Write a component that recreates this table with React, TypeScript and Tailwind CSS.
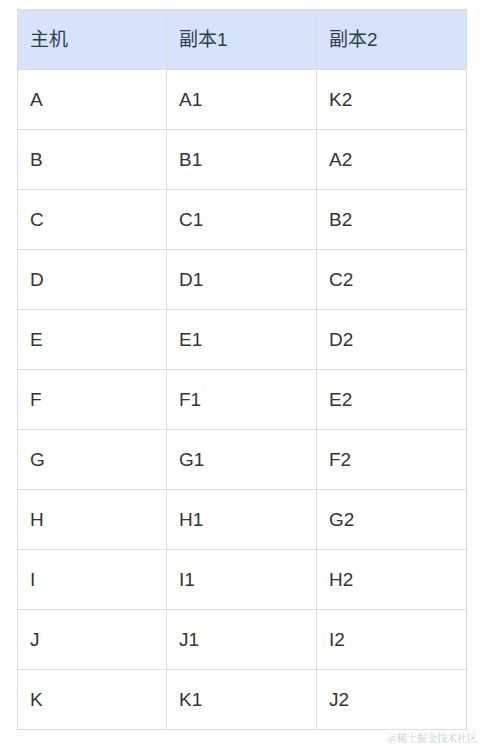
import React from 'react';

const rows: string[][] = [
  ['A', 'A1', 'K2'],
  ['B', 'B1', 'A2'],
  ['C', 'C1', 'B2'],
  ['D', 'D1', 'C2'],
  ['E', 'E1', 'D2'],
  ['F', 'F1', 'E2'],
  ['G', 'G1', 'F2'],
  ['H', 'H1', 'G2'],
  ['I', 'I1', 'H2'],
  ['J', 'J1', 'I2'],
  ['K', 'K1', 'J2'],
];

const font = { fontFamily: '"Liberation Sans", "Noto Sans CJK SC", sans-serif' };

export default function App() {
  return (
    <div className="relative w-[481px] h-[744px] bg-white overflow-hidden" style={font}>
      <div className="pt-[9px] pl-[17px]">
        <table className="w-[450px] border-collapse table-fixed text-[19px]">
          <thead>
            <tr className="h-[60px] bg-[#d6e3fa] text-[#2c3e50]">
              <th className="border border-[#dcdcdc] font-normal text-left pl-[12px] pt-[2px] w-[149px]">主机</th>
              <th className="border border-[#dcdcdc] font-normal text-left pl-[12px] pt-[2px] w-[150px]">副本1</th>
              <th className="border border-[#dcdcdc] font-normal text-left pl-[12px] pt-[2px]">副本2</th>
            </tr>
          </thead>
          <tbody className="text-[#333333]">
            {rows.map((r) => (
              <tr key={r[0]} className="h-[60px]">
                {r.map((c) => (
                  <td key={c} className="border border-[#dcdcdc] pl-[12px] pt-[2px]">{c}</td>
                ))}
              </tr>
            ))}
          </tbody>
        </table>
      </div>
      <div
        className="absolute right-[4px] bottom-[0px] text-[10px] leading-[13px] text-[#c8c8c8]"
        style={{ fontFamily: '"Noto Serif CJK SC", "Noto Sans CJK SC", serif' }}
      >
        @稀土掘金技术社区
      </div>
    </div>
  );
}
